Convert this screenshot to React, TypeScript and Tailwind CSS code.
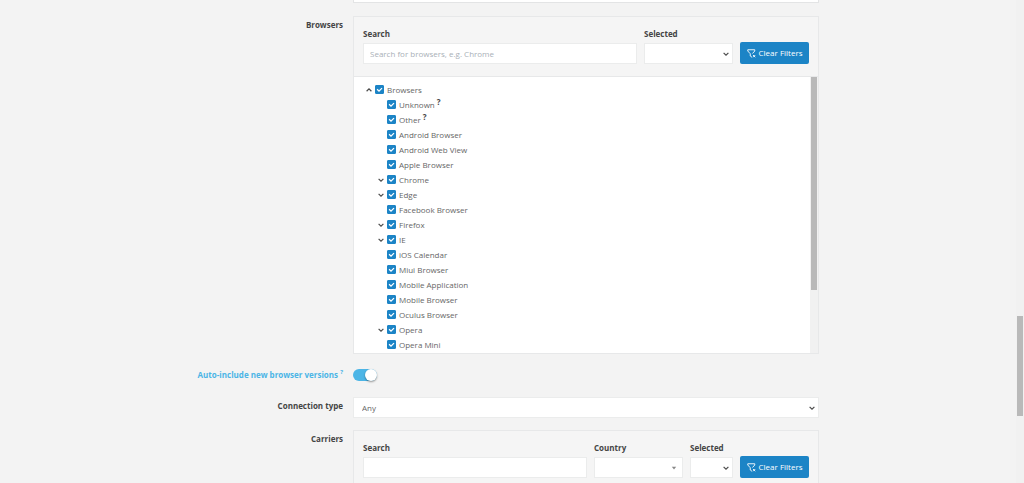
import { useState } from 'react'
import type { ReactNode } from 'react'

interface TreeItem {
  name: string
  hint?: boolean
  expandable?: boolean
}

const browsers: TreeItem[] = [
  { name: 'Unknown', hint: true },
  { name: 'Other', hint: true },
  { name: 'Android Browser' },
  { name: 'Android Web View' },
  { name: 'Apple Browser' },
  { name: 'Chrome', expandable: true },
  { name: 'Edge', expandable: true },
  { name: 'Facebook Browser' },
  { name: 'Firefox', expandable: true },
  { name: 'IE', expandable: true },
  { name: 'iOS Calendar' },
  { name: 'Miui Browser' },
  { name: 'Mobile Application' },
  { name: 'Mobile Browser' },
  { name: 'Oculus Browser' },
  { name: 'Opera', expandable: true },
  { name: 'Opera Mini' },
]

function Chevron({ up = false }: { up?: boolean }) {
  return (
    <svg viewBox="0 0 8 8" className="size-2 fill-none stroke-[#4a4a4a]" strokeWidth="1.2" aria-hidden="true">
      <path d={up ? 'M1.6 5.2 4 2.9l2.4 2.3' : 'M1.6 2.9 4 5.2l2.4-2.3'} />
    </svg>
  )
}

function CheckBox({ label, checked, onChange, hint }: { label: string; checked: boolean; onChange: () => void; hint?: boolean }) {
  return (
    <label className="flex items-center gap-[3px]">
      <span className="grid size-[9px] place-items-center">
        <input
          type="checkbox"
          checked={checked}
          onChange={onChange}
          className="col-start-1 row-start-1 size-[9px] appearance-none rounded-[1px] border border-[#1c84c6] bg-white checked:bg-[#1c84c6]"
        />
        {checked && (
          <svg viewBox="0 0 9 9" className="pointer-events-none col-start-1 row-start-1 size-[9px] fill-none stroke-white" strokeWidth="1.3" aria-hidden="true">
            <path d="M2.1 4.3 4 6.1l3-3" />
          </svg>
        )}
      </span>
      <span>{label}</span>
      {hint && <sup className="-top-[3px] -ml-px text-[8px] font-bold leading-none text-[#444]">?</sup>}
    </label>
  )
}

function Field({ id, label, className, children }: { id: string; label: string; className: string; children: ReactNode }) {
  return (
    <div className={className}>
      <label htmlFor={id} className="block h-[15px] font-bold leading-3 text-[#444]">
        {label}
      </label>
      {children}
    </div>
  )
}

function Select({ id, options, caret = false }: { id: string; options: string[]; caret?: boolean }) {
  return (
    <div className="relative">
      <select id={id} className="block h-[21px] w-full appearance-none border border-[#ebecec] bg-white px-2 text-[#666] outline-none">
        {options.map((option) => (
          <option key={option}>{option}</option>
        ))}
      </select>
      <span className="pointer-events-none absolute inset-y-0 right-[3px] flex items-center">
        {caret ? (
          <svg viewBox="0 0 8 8" className="mr-[2px] size-2 fill-[#888]" aria-hidden="true">
            <path d="M1.8 2.8h4.4L4 5.6z" />
          </svg>
        ) : (
          <Chevron />
        )}
      </span>
    </div>
  )
}

function ClearButton({ onClick }: { onClick?: () => void }) {
  return (
    <button type="button" onClick={onClick} className="flex h-[22px] w-[69px] shrink-0 items-center justify-center gap-[3px] whitespace-nowrap rounded-[2px] bg-[#1c84c6] text-white">
      <svg viewBox="0 0 18 18" className="size-[9px] fill-none stroke-white" strokeWidth="1.8" aria-hidden="true">
        <path d="M10 16.5 6.5 14V9.5L1.5 4V1.5h14V4L11 9" />
        <path d="m12 12 4.5 4.5m0-4.5L12 16.5" />
      </svg>
      Clear Filters
    </button>
  )
}

function Row({ label, children }: { label: ReactNode; children: ReactNode }) {
  return (
    <div className="grid grid-cols-[343fr_466fr_195fr] gap-x-[10px]">
      <div className="text-right font-bold leading-3 text-[#444]">{label}</div>
      <div className="min-w-0">{children}</div>
    </div>
  )
}

export default function App() {
  const [query, setQuery] = useState('')
  const [carrier, setCarrier] = useState('')
  const [off, setOff] = useState<string[]>([])
  const [autoInclude, setAutoInclude] = useState(true)

  const toggle = (name: string) => setOff((prev) => (prev.includes(name) ? prev.filter((item) => item !== name) : [...prev, name]))
  const visible = browsers.filter((item) => item.name.toLowerCase().includes(query.toLowerCase()))

  return (
    <main className="relative h-screen overflow-hidden bg-[#f3f3f3] font-['Open_Sans','Noto_Sans',sans-serif] text-[8px] text-[#666]">
      <Row label="">
        <div className="h-[3px] border-x border-b border-[#e3e4e5] bg-white" />
      </Row>

      <div className="mt-[13px]">
        <Row label={<div className="pt-[3px]">Browsers</div>}>
          <section className="border border-[#e7e8e9] bg-[#f5f5f5]">
            <div className="flex items-end gap-[7px] px-[9px] pt-[11px] pb-3">
              <Field id="browser-search" label="Search" className="min-w-0 flex-1">
                <input
                  id="browser-search"
                  type="text"
                  value={query}
                  onChange={(event) => setQuery(event.target.value)}
                  placeholder="Search for browsers, e.g. Chrome"
                  className="block h-[21px] w-full border border-[#ebecec] bg-white px-[6px] outline-none placeholder:text-[#a9b0b7]"
                />
              </Field>
              <Field id="browser-selected" label="Selected" className="w-[89px]">
                <Select id="browser-selected" options={['', 'Yes', 'No']} />
              </Field>
              <ClearButton onClick={() => setQuery('')} />
            </div>
            <div className="flex h-[277px] overflow-hidden border-t border-[#e7e8e9] bg-white">
              <ul className="flex-1 pt-[5px] pl-[11px] leading-[15px]">
                <li className="flex h-[15px] items-center gap-[2px]">
                  <button type="button" aria-label="Collapse Browsers">
                    <Chevron up />
                  </button>
                  <CheckBox label="Browsers" checked={off.length === 0} onChange={() => setOff(off.length ? [] : browsers.map((item) => item.name))} />
                </li>
                {visible.map((item) => (
                  <li key={item.name} className="flex h-[15px] items-center gap-[2px] pl-3">
                    {item.expandable ? (
                      <button type="button" aria-label={`Expand ${item.name}`}>
                        <Chevron />
                      </button>
                    ) : (
                      <span className="w-2" />
                    )}
                    <CheckBox label={item.name} hint={item.hint} checked={!off.includes(item.name)} onChange={() => toggle(item.name)} />
                  </li>
                ))}
              </ul>
              <div className="w-2 bg-[#f1f1f1] px-px">
                <div className="h-[213px] bg-[#b9b9b9]" />
              </div>
            </div>
          </section>
        </Row>
      </div>

      <div className="mt-[15px]">
        <Row
          label={
            <label htmlFor="auto-include" className="text-[#4cb5e6]">
              Auto-include new browser versions <sup className="-top-1 text-[6px]">?</sup>
            </label>
          }
        >
          <input
            id="auto-include"
            type="checkbox"
            role="switch"
            checked={autoInclude}
            onChange={(event) => setAutoInclude(event.target.checked)}
            className="block h-3 w-6 appearance-none rounded-full bg-[#ccc] before:block before:size-3 before:rounded-full before:bg-white before:shadow-[0_1px_2px_rgba(0,0,0,0.4)] checked:bg-[#4cb5e6] checked:before:ml-3"
          />
        </Row>
      </div>

      <div className="mt-4">
        <Row label={<label htmlFor="connection" className="block pt-[3px]">Connection type</label>}>
          <Select id="connection" options={['Any', 'Cellular', 'Wi-Fi']} />
        </Row>
      </div>

      <div className="mt-3">
        <Row label={<div className="pt-[3px]">Carriers</div>}>
          <section className="border border-[#e7e8e9] bg-[#f5f5f5]">
            <div className="flex items-end gap-[7px] px-[9px] pt-[11px] pb-3">
              <Field id="carrier-search" label="Search" className="min-w-0 flex-1">
                <input
                  id="carrier-search"
                  type="text"
                  value={carrier}
                  onChange={(event) => setCarrier(event.target.value)}
                  className="block h-[21px] w-full border border-[#ebecec] bg-white px-[6px] outline-none"
                />
              </Field>
              <Field id="carrier-country" label="Country" className="w-[89px]">
                <Select id="carrier-country" options={['']} caret />
              </Field>
              <Field id="carrier-selected" label="Selected" className="w-[43px]">
                <Select id="carrier-selected" options={['', 'Yes', 'No']} />
              </Field>
              <ClearButton onClick={() => setCarrier('')} />
            </div>
          </section>
        </Row>
      </div>

      <div className="absolute inset-y-0 right-0 w-2 bg-[#f1f1f1] px-px">
        <div className="mt-[316px] h-[100px] bg-[#b9b9b9]" />
      </div>
    </main>
  )
}
